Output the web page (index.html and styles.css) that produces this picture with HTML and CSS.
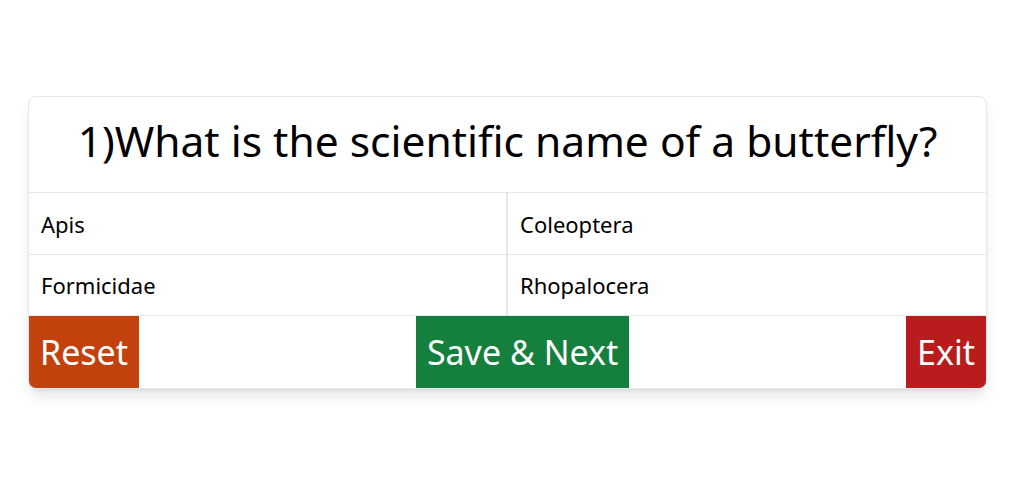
FILE: index.html
```html
<!DOCTYPE html>
<html>
<head>
<meta charset="utf-8">
<link rel="stylesheet" href="styles.css">
</head>
<body>
<div class="page">
  <div class="card">
    <div class="question">1)What is the scientific name of a butterfly?</div>
    <div class="options">
      <div class="opt">Apis</div>
      <div class="opt">Coleoptera</div>
      <div class="opt">Formicidae</div>
      <div class="opt">Rhopalocera</div>
    </div>
    <div class="actions">
      <button class="btn reset">Reset</button>
      <button class="btn save">Save &amp; Next</button>
      <button class="btn exit">Exit</button>
    </div>
  </div>
</div>
</body>
</html>
```

FILE: styles.css
```css
* { box-sizing: border-box; }
html, body { margin: 0; padding: 0; background: #fff; }
body { font-family: "Noto Sans", "Open Sans", sans-serif; color: #000; }
.page {
  height: 481px;
  padding: 96px 0 0 28px;
  display: flex;
  align-items: flex-start;
}
.card {
  width: 959px;
  border: 1px solid #e5e7eb;
  border-radius: 8px;
  overflow: hidden;
  box-shadow: 0 10px 15px -3px rgba(0,0,0,0.1), 0 4px 6px -4px rgba(0,0,0,0.1);
  background: #fff;
}
.question {
  height: 96px;
  display: flex;
  align-items: center;
  justify-content: center;
  font-size: 42.5px;
  line-height: 1;
  padding-bottom: 7px;
  border-bottom: 1px solid #e5e7eb;
}
.options {
  display: grid;
  grid-template-columns: 479px 1fr;
}
.opt {
  height: 62px;
  display: flex;
  align-items: center;
  padding: 0 12px;
  font-size: 22px;
  border-bottom: 1px solid #e5e7eb;
}
.opt:nth-child(odd) { border-right: 2px solid #e5e7eb; }
.opt:nth-child(3), .opt:nth-child(4) { height: 61px; }
.actions {
  display: flex;
  justify-content: space-between;
  height: 72px;
}
.btn {
  border: 0;
  margin: 0;
  font-family: inherit;
  font-size: 34px;
  color: #fff;
  padding: 0 11px;
  height: 72px;
}
.reset { background: #c2410c; }
.save { background: #15803d; }
.exit { background: #b91c1c; }
```
